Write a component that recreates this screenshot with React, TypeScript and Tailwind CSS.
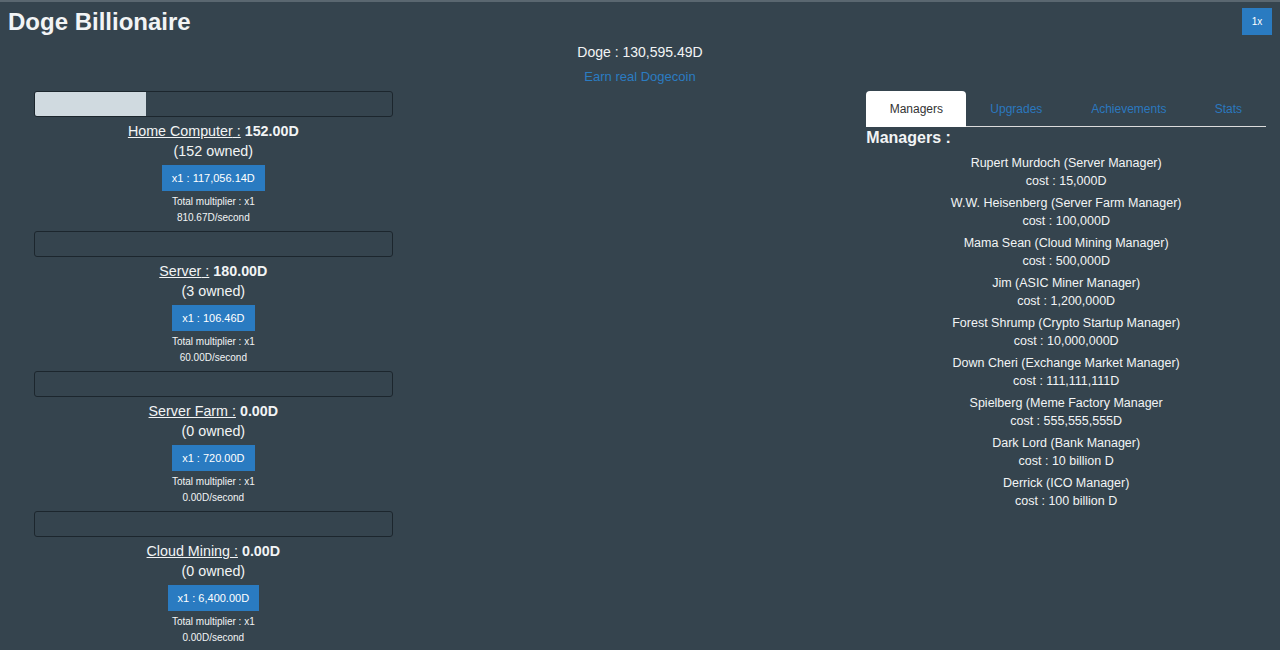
import {useState} from "react";

const buildings = [
    {name: "Home Computer", value: "152.00D", owned: 152, cost: "117,056.14D", perSecond: "810.67D/second", progress: 31},
    {name: "Server", value: "180.00D", owned: 3, cost: "106.46D", perSecond: "60.00D/second", progress: 0},
    {name: "Server Farm", value: "0.00D", owned: 0, cost: "720.00D", perSecond: "0.00D/second", progress: 0},
    {name: "Cloud Mining", value: "0.00D", owned: 0, cost: "6,400.00D", perSecond: "0.00D/second", progress: 0},
];

const managers = [
    {name: "Rupert Murdoch (Server Manager)", cost: "15,000D"},
    {name: "W.W. Heisenberg (Server Farm Manager)", cost: "100,000D"},
    {name: "Mama Sean (Cloud Mining Manager)", cost: "500,000D"},
    {name: "Jim (ASIC Miner Manager)", cost: "1,200,000D"},
    {name: "Forest Shrump (Crypto Startup Manager)", cost: "10,000,000D"},
    {name: "Down Cheri (Exchange Market Manager)", cost: "111,111,111D"},
    {name: "Spielberg (Meme Factory Manager", cost: "555,555,555D"},
    {name: "Dark Lord (Bank Manager)", cost: "10 billion D"},
    {name: "Derrick (ICO Manager)", cost: "100 billion D"},
];

const tabs = ["Managers", "Upgrades", "Achievements", "Stats"];

function Building({b}: { b: typeof buildings[number] }) {
    return (
        <div className="flex flex-col items-center pb-[5px]">
            <div className="w-full h-[26px] rounded-[3px] border border-[#1c262d] overflow-hidden">
                <div className="h-full bg-[#d0dae0]" style={{width: `${b.progress}%`}}/>
            </div>
            <div className="mt-1 h-5 leading-5 text-[14.3px]">
                <span className="underline">{b.name} :</span> <span className="font-bold">{b.value}</span>
            </div>
            <div className="h-5 leading-5 text-[14.3px]">({b.owned} owned)</div>
            <button className="mt-1 h-[26px] px-[10px] bg-[#2a7bc1] text-[11px] text-white">
                x1 : {b.cost}
            </button>
            <div className="mt-[3px] h-4 leading-4 text-[10px]">Total multiplier : x1</div>
            <div className="h-4 leading-4 text-[10px]">{b.perSecond}</div>
        </div>
    );
}

export default function App() {
    const [tab, setTab] = useState("Managers");

    return (
        <div className="w-[1280px] h-[650px] overflow-hidden bg-[#35444e] border-t-2 border-[#5a6770] text-[#f2f4f5] font-['Liberation_Sans',Arial,sans-serif]">
            <div className="flex items-start justify-between pl-2 pr-2 pt-[5px]">
                <h1 className="text-[24px] font-bold leading-[30px]">Doge Billionaire</h1>
                <button className="mt-[1px] w-[30px] h-[27px] bg-[#2a7bc1] text-[10px] text-white">1x</button>
            </div>
            <div className="flex flex-col items-center mt-1">
                <div className="h-[22px] leading-[22px] text-[14px]">Doge : 130,595.49D</div>
                <a className="mt-[2px] h-[24px] leading-[24px] text-[13px] text-[#2b7cc2]">Earn real Dogecoin</a>
            </div>
            <div className="grid grid-cols-3 mt-[2px]">
                <div className="px-[34px]">
                    {buildings.map(b => <Building key={b.name} b={b}/>)}
                </div>
                <div/>
                <div className="pl-[13px] pr-[14px]">
                    <div className="flex h-[36px] border-b border-[#dcdcdc] text-[12px]">
                        {tabs.map((t, i) => (
                            <button key={t} onClick={() => setTab(t)}
                                    className={`h-[36px] ${["w-[100px]", "w-[100px]", "w-[125px]", "w-[74px]"][i]} ${tab === t ? "bg-white text-[#333] rounded-t-[4px]" : "text-[#2b78bf]"}`}>
                                {t}
                            </button>
                        ))}
                    </div>
                    <div className="mt-[2px] h-[18px] leading-[18px] text-[16px] font-bold">Managers :</div>
                    <div className="flex flex-col items-center gap-1 mt-[7px] text-[12.5px]">
                        {managers.map(m => (
                            <div key={m.name} className="flex flex-col items-center">
                                <div className="h-[18px] leading-[18px]">{m.name}</div>
                                <div className="h-[18px] leading-[18px]">cost : {m.cost}</div>
                            </div>
                        ))}
                    </div>
                </div>
            </div>
        </div>
    );
}
